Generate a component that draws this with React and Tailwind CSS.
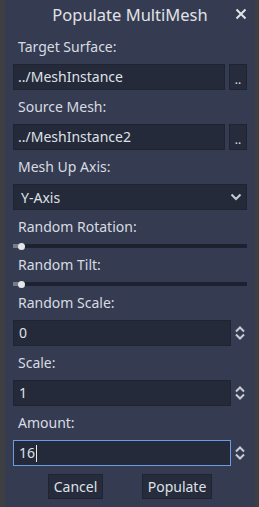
import React from "react";

const font = { fontFamily: '"Noto Sans", "Open Sans", sans-serif' };

function Label({ children }) {
  return (
    <div className="h-[26px] leading-[26px] text-[14px] text-[#d8dbe2] pl-[5px]">{children}</div>
  );
}

function LineEdit({ value }) {
  return (
    <div className="flex h-[26px]">
      <div className="flex-1 bg-[#242a3a] border border-[#1f2433] pl-[4px] leading-[24px] text-[14px] text-[#dfe1e6]">
        {value}
      </div>
      <div className="ml-[4px] w-[18px] bg-[#262c3c] border border-[#1f2433] flex items-end justify-center pb-[3px] text-[12px] leading-[12px] text-[#dfe1e6]">
        ..
      </div>
    </div>
  );
}

function Slider() {
  return (
    <div className="relative h-[4px] bg-[#1d2231]">
      <div className="absolute left-0 top-0 h-[4px] w-[7px] bg-[#777c88]" />
      <div className="absolute left-[5px] top-[-1.5px] w-[7px] h-[7px] rounded-full bg-[#e4e6ea]" />
    </div>
  );
}

function SpinArrows() {
  return (
    <svg width="12" height="16" viewBox="0 0 12 16" className="ml-[2px]">
      <path d="M2 6.5 L6 2.5 L10 6.5" stroke="#c9ccd3" strokeWidth="2" fill="none" />
      <path d="M2 9.5 L6 13.5 L10 9.5" stroke="#c9ccd3" strokeWidth="2" fill="none" />
    </svg>
  );
}

function SpinBox({ value, focused }) {
  return (
    <div className="flex h-[26px] items-center">
      <div
        className={
          "h-[26px] w-[218px] bg-[#242a3a] border pl-[5px] leading-[24px] text-[14px] text-[#dfe1e6] flex items-center " +
          (focused ? "border-[#6b9de6]" : "border-[#1f2433]")
        }
      >
        <span>{value}</span>
        {focused && <span className="inline-block w-[1px] h-[17px] bg-[#e6e8ec] ml-[1px]" />}
      </div>
      <div className="flex-1 flex justify-center">
        <SpinArrows />
      </div>
    </div>
  );
}

export default function App() {
  return (
    <div className="w-[259px] h-[507px] overflow-hidden bg-[#3e3f42] flex" style={font}>
      <div className="ml-[5px] w-[250px] h-[507px] bg-[#353c51] flex flex-col">
        <div className="relative h-[30px] flex items-center justify-center text-[16.5px] text-[#e0e2e7]">
          Populate MultiMesh
          <svg width="12" height="12" viewBox="0 0 12 12" className="absolute left-[230px] top-[8px]">
            <path d="M1.5 1.5 L10.5 10.5 M10.5 1.5 L1.5 10.5" stroke="#e2e4e8" strokeWidth="2" />
          </svg>
        </div>
        <div className="px-[8px] pt-[4px] flex flex-col gap-[4px]">
          <Label>Target Surface:</Label>
          <LineEdit value="../MeshInstance" />
          <Label>Source Mesh:</Label>
          <LineEdit value="../MeshInstance2" />
          <Label>Mesh Up Axis:</Label>
          <div className="h-[26px] bg-[#242a3a] border border-[#1f2433] flex items-center justify-between pl-[7px] pr-[4px] text-[14px] text-[#dfe1e6]">
            <span>Y-Axis</span>
            <svg width="12" height="8" viewBox="0 0 12 8">
              <path d="M1.5 1.5 L6 6 L10.5 1.5" stroke="#c9ccd3" strokeWidth="2" fill="none" />
            </svg>
          </div>
          <Label>Random Rotation:</Label>
          <Slider />
          <Label>Random Tilt:</Label>
          <Slider />
          <Label>Random Scale:</Label>
          <SpinBox value="0" />
          <Label>Scale:</Label>
          <SpinBox value="1" />
          <Label>Amount:</Label>
          <SpinBox value="16" focused />
          <div className="mt-[4px] flex justify-center gap-[39px]">
            <div className="w-[55px] h-[25px] bg-[#262c3c] border border-[#1f2433] flex items-center justify-center text-[14px] text-[#dfe1e6]">
              Cancel
            </div>
            <div className="w-[70px] h-[25px] bg-[#262c3c] border border-[#1f2433] flex items-center justify-center text-[14px] text-[#dfe1e6]">
              Populate
            </div>
          </div>
        </div>
      </div>
    </div>
  );
}
